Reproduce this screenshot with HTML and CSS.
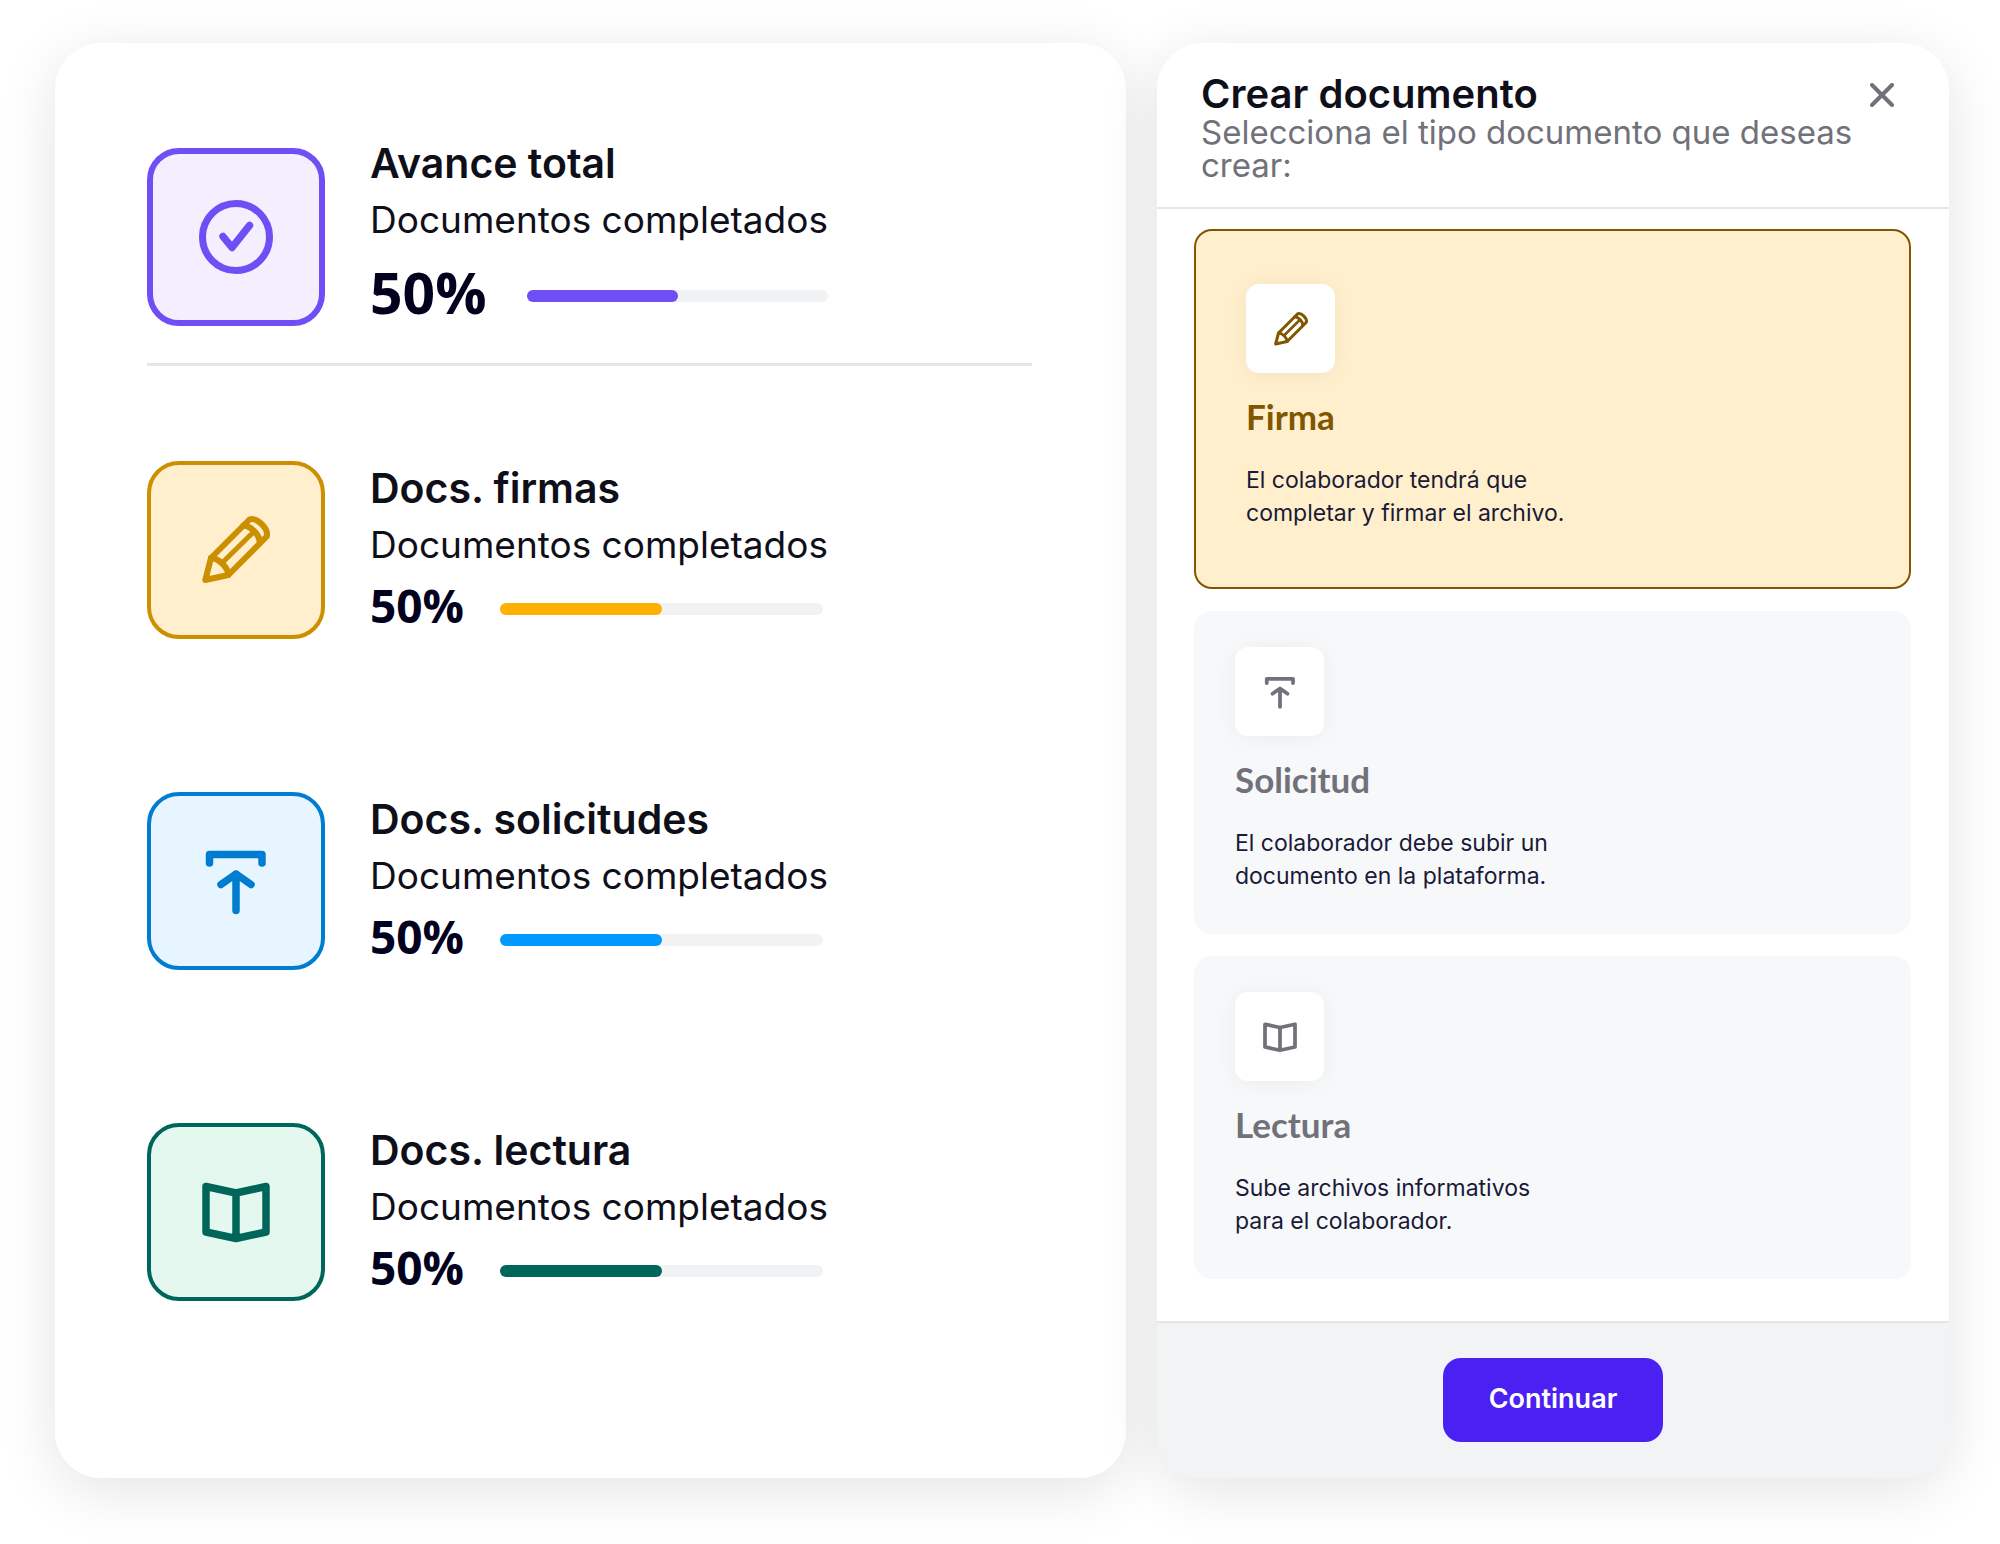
FILE: index.html
```html
<!DOCTYPE html>
<html lang="es">
<head>
    <meta charset="UTF-8">
    <meta name="viewport" content="width=device-width, initial-scale=1.0">
    <title>Documentos</title>
    <link rel="stylesheet" href="styles.css">
</head>
<body>
    <!-- Shared icons -->
    <svg class="sprite" aria-hidden="true">
        <symbol id="icon-check" viewBox="0 0 80 80">
            <circle cx="40" cy="40" r="33.5" stroke-width="7" />
            <path d="M27 39.5 L36 50.5 L53.5 28.5" stroke-width="7.5" />
        </symbol>
        <symbol id="icon-pencil" viewBox="0 0 80 80">
            <path d="M9.3 70 L15 48 L53.5 9.5 C61 7 73 19 70.7 26.5 L32.3 65 Z" stroke-width="6" />
            <path d="M15 48 C22 48 32 57 32.3 65" stroke-width="6" />
            <path d="M47.5 15.5 C55 16 64 25 63.8 33" stroke-width="6" />
            <path d="M27 52 L56 23.5" stroke-width="5" />
            <path d="M9.3 70 L10.5 65.5 L14 69 Z" stroke-width="4" />
        </symbol>
        <symbol id="icon-upload" viewBox="0 0 80 80">
            <path d="M13.5 22 V13.5 H66 V22" stroke-width="7.5" />
            <path d="M40 69.5 V33 M25 43.5 L40 33 L55 43.5" stroke-width="7.5" />
        </symbol>
        <symbol id="icon-book" viewBox="0 0 80 80">
            <path d="M10 14.5 L40 21 L70 14.5 V60 L40 66.5 L10 60 Z M40 21 V66.5" stroke-width="7.5" />
        </symbol>
    </svg>

    <main class="page">
        <section class="panel progress-panel">
            <article class="stat stat-total">
                <div class="stat-icon purple"><svg class="icon"><use href="#icon-check" /></svg></div>
                <div class="stat-info">
                    <h2 class="stat-title">Avance total</h2>
                    <p class="stat-text">Documentos completados</p>
                    <div class="stat-progress">
                        <span class="percent">50%</span>
                        <div class="bar" role="progressbar" aria-label="Avance total" aria-valuenow="50">
                            <div class="bar-fill purple-fill" style="width: 50%"></div>
                        </div>
                    </div>
                </div>
            </article>

            <div class="stat-list">
                <article class="stat">
                    <div class="stat-icon yellow"><svg class="icon"><use href="#icon-pencil" /></svg></div>
                    <div class="stat-info">
                        <h2 class="stat-title">Docs. firmas</h2>
                        <p class="stat-text">Documentos completados</p>
                        <div class="stat-progress">
                            <span class="percent">50%</span>
                            <div class="bar" role="progressbar" aria-label="Docs. firmas" aria-valuenow="50">
                                <div class="bar-fill yellow-fill" style="width: 50%"></div>
                            </div>
                        </div>
                    </div>
                </article>

                <article class="stat">
                    <div class="stat-icon blue"><svg class="icon"><use href="#icon-upload" /></svg></div>
                    <div class="stat-info">
                        <h2 class="stat-title">Docs. solicitudes</h2>
                        <p class="stat-text">Documentos completados</p>
                        <div class="stat-progress">
                            <span class="percent">50%</span>
                            <div class="bar" role="progressbar" aria-label="Docs. solicitudes" aria-valuenow="50">
                                <div class="bar-fill blue-fill" style="width: 50%"></div>
                            </div>
                        </div>
                    </div>
                </article>

                <article class="stat">
                    <div class="stat-icon green"><svg class="icon"><use href="#icon-book" /></svg></div>
                    <div class="stat-info">
                        <h2 class="stat-title">Docs. lectura</h2>
                        <p class="stat-text">Documentos completados</p>
                        <div class="stat-progress">
                            <span class="percent">50%</span>
                            <div class="bar" role="progressbar" aria-label="Docs. lectura" aria-valuenow="50">
                                <div class="bar-fill green-fill" style="width: 50%"></div>
                            </div>
                        </div>
                    </div>
                </article>
            </div>
        </section>

        <form class="panel modal">
            <header class="modal-header">
                <div class="modal-heading">
                    <h1 class="modal-title">Crear documento</h1>
                    <p class="modal-subtitle">Selecciona el tipo documento que deseas crear:</p>
                </div>
                <button type="button" class="close" aria-label="Cerrar">
                    <svg class="close-icon" viewBox="0 0 24 24"><path d="M2 2 L22 22 M22 2 L2 22" /></svg>
                </button>
            </header>

            <div class="options">
                <label class="option">
                    <input type="radio" name="tipo" value="firma" class="option-input" checked>
                    <span class="option-icon"><svg class="icon"><use href="#icon-pencil" /></svg></span>
                    <span class="option-title">Firma</span>
                    <span class="option-text">El colaborador tendrá que completar y firmar el archivo.</span>
                </label>
                <label class="option">
                    <input type="radio" name="tipo" value="solicitud" class="option-input">
                    <span class="option-icon"><svg class="icon"><use href="#icon-upload" /></svg></span>
                    <span class="option-title">Solicitud</span>
                    <span class="option-text">El colaborador debe subir un documento en la plataforma.</span>
                </label>
                <label class="option">
                    <input type="radio" name="tipo" value="lectura" class="option-input">
                    <span class="option-icon"><svg class="icon"><use href="#icon-book" /></svg></span>
                    <span class="option-title">Lectura</span>
                    <span class="option-text">Sube archivos informativos para el colaborador.</span>
                </label>
            </div>

            <footer class="modal-footer">
                <button type="button" class="continue">Continuar</button>
            </footer>
        </form>
    </main>
</body>
</html>
```
FILE: styles.css
```css
* {
    box-sizing: border-box;
}

body {
    margin: 0;
    background: #fff;
    color: #0f0f1a;
    font-family: Inter, "Liberation Sans", sans-serif;
}

h1, h2, p {
    margin: 0;
}

.sprite {
    display: none;
}

.page {
    display: grid;
    grid-template-columns: 1071fr 792fr;
    gap: 31px;
    padding: 43px 51px 66px 55px;
}

.panel {
    background: #fff;
    border-radius: 46px;
    box-shadow: 0 12px 60px rgba(0, 0, 0, 0.11);
}

.icon {
    width: 80px;
    height: 80px;
    fill: none;
    stroke: currentColor;
    stroke-linecap: round;
    stroke-linejoin: round;
}

/* Progress panel */
.progress-panel {
    padding: 96px 94px 96px 92px;
}

.stat {
    display: flex;
    align-items: center;
    gap: 45px;
}

.stat-total {
    padding-bottom: 28px;
    border-bottom: 3px solid #e6e6e6;
}

.stat-list {
    display: flex;
    flex-direction: column;
    gap: 153px;
    padding-top: 95px;
}

.stat-icon {
    display: flex;
    align-items: center;
    justify-content: center;
    flex-shrink: 0;
    width: 178px;
    height: 178px;
    border: 4px solid currentColor;
    border-radius: 32px;
}

.stat-total .stat-icon {
    border-width: 6px;
}

.purple {
    color: #6f4ef6;
    background: #f3efff;
}

.yellow {
    color: #cc8f00;
    background: #ffefcc;
}

.blue {
    color: #007dd1;
    background: #e6f5ff;
}

.green {
    color: #00665a;
    background: #e4f8f0;
}

.stat-title {
    font-size: 41px;
    font-weight: 600;
    line-height: 48px;
}

.stat-text {
    font-size: 37px;
    line-height: 66px;
}

.stat-progress {
    display: flex;
    align-items: center;
}

.percent {
    width: 130px;
    padding-bottom: 4px;
    color: #02021f;
    font-family: "Open Sans", sans-serif;
    font-size: 46px;
    font-weight: 700;
    line-height: 54px;
}

.stat-total .percent {
    width: 157px;
    font-size: 57px;
    line-height: 78px;
}

.bar {
    width: 323px;
    height: 12px;
    margin-top: 4px;
    border-radius: 6px;
    background: #f1f2f4;
}

.stat-total .bar {
    width: 301px;
}

.bar-fill {
    height: 100%;
    border-radius: 6px;
}

.purple-fill {
    background: #6f4ef6;
}

.yellow-fill {
    background: #ffb000;
}

.blue-fill {
    background: #0099ff;
}

.green-fill {
    background: #00665a;
}

/* Modal */
.modal {
    display: flex;
    flex-direction: column;
    overflow: hidden;
}

.modal-header {
    display: flex;
    align-items: flex-start;
    justify-content: space-between;
    padding: 29px 55px 25px 44px;
    border-bottom: 2px solid #e6e6e6;
}

.modal-title {
    font-size: 40px;
    font-weight: 600;
    line-height: 44px;
}

.modal-subtitle {
    color: #71717a;
    font-size: 33px;
    line-height: 33px;
}

.close {
    flex-shrink: 0;
    padding: 11px 0;
    border: none;
    background: none;
    color: #71717a;
    cursor: pointer;
}

.close-icon {
    display: block;
    width: 24px;
    height: 24px;
    stroke: currentColor;
    stroke-width: 4;
    stroke-linecap: round;
}

.options {
    display: flex;
    flex-direction: column;
    flex-grow: 1;
    gap: 22px;
    padding: 20px 38px 42px 37px;
}

.option {
    position: relative;
    display: flex;
    flex-direction: column;
    align-items: flex-start;
    padding: 36px 41px 41px;
    border-radius: 18px;
    background: #f7f8fa;
    color: #71717a;
    cursor: pointer;
}

.option:has(:checked) {
    padding: 53px 50px 57px;
    border: 2px solid #805600;
    background: #ffefcc;
    color: #805600;
}

.option-input {
    position: absolute;
    opacity: 0;
}

.option-icon {
    display: flex;
    align-items: center;
    justify-content: center;
    width: 89px;
    height: 89px;
    margin-bottom: 21px;
    border-radius: 13px;
    background: #fff;
    box-shadow: 0 2px 24px rgba(0, 0, 0, 0.05);
}

.option-icon .icon {
    width: 40px;
    height: 40px;
}

.option-title {
    margin-bottom: 26px;
    font-family: Lato, sans-serif;
    font-size: 35px;
    font-weight: 700;
    line-height: 44px;
}

.option-text {
    max-width: 336px;
    color: #1a1a38;
    font-size: 23px;
    line-height: 33px;
}

.modal-footer {
    display: flex;
    justify-content: center;
    padding: 35px 35px 36px;
    border-top: 2px solid #e4e5e7;
    background: #f1f3f5;
}

.continue {
    padding: 24px 46px 27px;
    border: none;
    border-radius: 18px;
    background: #4a20f3;
    color: #fff;
    font-family: inherit;
    font-size: 27px;
    font-weight: 600;
    line-height: 33px;
    cursor: pointer;
}
```
